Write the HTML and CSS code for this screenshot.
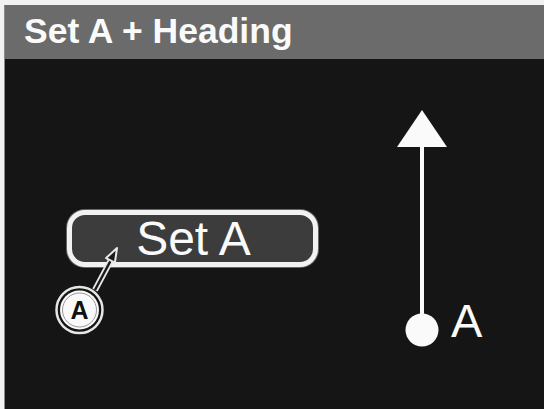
FILE: index.html
```html
<!DOCTYPE html>
<html>
<head>
<meta charset="utf-8">
<link rel="stylesheet" href="styles.css">
</head>
<body>
<div class="screen">
  <div class="header">Set A + Heading</div>
  <div class="canvas">
    <div class="left">
      <div class="btn">Set A</div>
    </div>
    <svg class="heading" width="100" height="250" viewBox="0 0 100 250">
      <polygon points="27,5 52,42 2,42" fill="#fafafa"/>
      <rect x="25" y="40" width="4" height="185" fill="#fafafa"/>
      <circle cx="27" cy="225" r="16.5" fill="#fafafa"/>
      <text x="56" y="232" class="pt-label">A</text>
    </svg>
    <svg class="callout" width="200" height="300" viewBox="0 0 200 300">
      <line x1="91" y1="231" x2="107" y2="201" stroke="#e8e8e8" stroke-width="6"/>
      <line x1="91" y1="231" x2="107" y2="201" stroke="#1a1a1a" stroke-width="2.5"/>
      <polygon points="113,189 110.9,203.7 102.1,199.1" fill="#1a1a1a" stroke="#e8e8e8" stroke-width="2" stroke-linejoin="round"/>
      <circle cx="75.5" cy="251" r="23" fill="#151515" stroke="#e6e6e6" stroke-width="2.5"/>
      <circle cx="75.5" cy="251" r="19.5" fill="#fafafa"/>
      <circle cx="75.5" cy="251" r="17" fill="none" stroke="#9a9a9a" stroke-width="1"/>
      <text x="75.5" y="260" class="callout-label">A</text>
    </svg>
  </div>
</div>
</body>
</html>
```
FILE: styles.css
```css
html, body {
  margin: 0;
  padding: 0;
  background: #f2f2f2;
  overflow: hidden;
}
.screen {
  margin: 5px 0 0 4px;
  width: 540px;
  height: 404px;
  background: #151515;
  border-left: 1px solid #8a8a8a;
  box-sizing: border-box;
  font-family: "Liberation Sans", Arial, sans-serif;
}
.header {
  height: 54px;
  background: #6b6b6b;
  color: #fafafa;
  font-weight: bold;
  font-size: 35.5px;
  line-height: 52px;
  padding-left: 19px;
  box-sizing: border-box;
}
.canvas {
  position: relative;
  display: flex;
  align-items: flex-start;
  height: 350px;
}
.left {
  padding: 151px 0 0 62px;
}
.btn {
  width: 251px;
  height: 57px;
  box-sizing: border-box;
  border: 5px solid #f2f2f2;
  border-radius: 18px;
  background: #3c3c3c;
  box-shadow: 0 0 0 1px #666;
  color: #fafafa;
  font-size: 48px;
  display: flex;
  align-items: center;
  justify-content: center;
  padding-left: 2px;
}
.heading {
  margin: 46px 0 0 77px;
  display: block;
}
.pt-label {
  font-family: "Liberation Sans", Arial, sans-serif;
  font-size: 47px;
  fill: #fafafa;
}
.callout {
  position: absolute;
  left: -1px;
  top: 0;
  pointer-events: none;
}
.callout-label {
  font-family: "Liberation Sans", Arial, sans-serif;
  font-weight: bold;
  font-size: 25px;
  fill: #111;
  text-anchor: middle;
}
```
